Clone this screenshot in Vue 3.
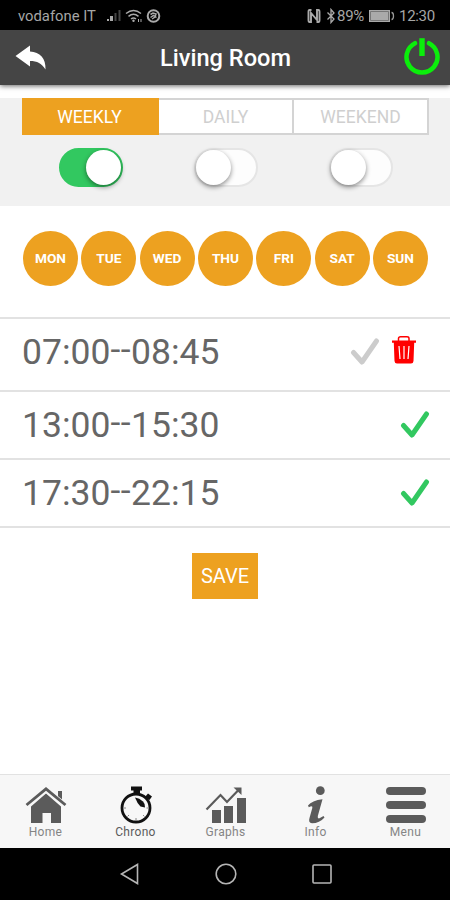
<!-- Weekly chrono programming screen -->
<template>
  <div class="screen">
    <div class="status-bar">
      <span class="carrier">vodafone IT</span>
      <svg class="status-left" viewBox="0 0 56 16">
        <path d="M1 13h2v-2H1zM4 13h3V8H4z" fill="#aaa" />
        <path d="M8.500 13h2V5h-2zM12.500 13h2V2h-2z" fill="#444" />
        <g fill="none" stroke="#aaa" stroke-width="1.500">
          <path d="M20 5.500q7.500-6 15 0M22.500 8.300q5-4 10 0M25 11q2.500-2 5 0" />
          <circle cx="47.500" cy="8" r="5.800" stroke-width="2" />
          <path d="M44.500 6.500l2.500-1.500 3 1-1 3-3 2M44.500 9.500l3-2 3 2" />
        </g>
        <circle cx="27.500" cy="12.800" r="1.200" fill="#aaa" />
        <path d="M32.500 11v3M35 11v3" stroke="#aaa" />
      </svg>
      <svg class="status-right" viewBox="0 0 30 16">
        <g fill="none" stroke="#aaa">
          <path d="M4.500 2H2.500Q1.500 2 1.500 4v8q0 2 1 2h1.500V5l6 7V2h1.500q1 0 1 2v8q0 2-1 2H9.500" stroke-width="1.900" />
          <path d="M20.500 4.500l6.500 6.500-3 3.500v-13l3 3.500-6.500 6.500" stroke-width="1.300" />
        </g>
      </svg>
      <span class="percent">89%</span>
      <svg class="battery" viewBox="0 0 27 14">
        <rect x="1" y="1" width="21" height="12" fill="#aaa" />
        <path d="M2.500 2.500h18v9h-18z" fill="none" stroke="#777" />
        <path d="M23.500 3.500q2 0 2 3.500t-2 3.500" fill="none" stroke="#999" stroke-width="1.300" />
      </svg>
      <span class="clock">12:30</span>
    </div>

    <header class="header">
      <button class="icon-btn">
        <svg class="back" viewBox="0 0 32 26">
          <path d="M0.500 11L15 0.500V6.500C25 7 31 13 30.500 24.500C27 18.500 22 16 15 16V21.500Z" fill="#fff" />
        </svg>
      </button>
      <h1>Living Room</h1>
      <button class="icon-btn" @click="powered = !powered">
        <svg class="power" :class="{ off: !powered }" viewBox="0 0 38 38">
          <g fill="none" stroke="currentColor">
            <path d="M12 6.200A15.500 15.500 0 1 0 26 6.200" stroke-width="4.500" stroke-linecap="round" />
            <path d="M19 1.200V19" stroke-width="5.400" />
          </g>
        </svg>
      </button>
    </header>

    <section class="modes">
      <div class="segments">
        <button
          v-for="mode in modes"
          :key="mode"
          :class="['segment', { active: mode === selectedMode }]"
          @click="selectedMode = mode"
        >{{ mode }}</button>
      </div>
      <div class="switches">
        <div v-for="mode in modes" :key="mode" class="switch-cell">
          <button :class="['switch', { on: mode === selectedMode }]" @click="selectedMode = mode">
            <span class="knob"></span>
          </button>
        </div>
      </div>
    </section>

    <section class="days">
      <button
        v-for="day in days"
        :key="day.name"
        :class="['day', { inactive: !day.active }]"
        @click="day.active = !day.active"
      >{{ day.name }}</button>
    </section>

    <section class="slots">
      <div v-for="slot in slots" :key="slot.start" :class="['slot', { editing: !slot.enabled }]">
        <span class="time">{{ slot.start }}<span class="dash">--</span>{{ slot.end }}</span>
        <svg :class="['check', { enabled: slot.enabled }]" viewBox="0 0 30 30" @click="slot.enabled = !slot.enabled">
          <path d="M3.500 15.500L12 25L26.500 4" />
        </svg>
        <svg v-if="!slot.enabled" class="trash" viewBox="0 0 26 30" @click="removeSlot(slot)">
          <path d="M7.500 6V3.500Q7.500 1.800 9.500 1.800H16Q18 1.800 18 3.500V6" fill="none" stroke="#f00" stroke-width="1.500" />
          <path d="M1 5.500H25V7.800H23.200L22.500 26Q22.300 28.500 20 28.500H6Q3.700 28.500 3.500 26L2.800 7.800H1Z" fill="#f00" />
          <path d="M8 11L9 24M13 11V24M18 11L17 24" stroke="#fff" stroke-width="1.200" />
        </svg>
      </div>
    </section>

    <div class="save-area">
      <button class="save">SAVE</button>
    </div>

    <nav class="tab-bar">
      <button class="tab">
        <svg viewBox="0 0 42 38" fill="#5b5b5b">
          <path d="M33 5h4v12L33 13z" />
          <path d="M21 7.500L36 20.500V37H26V27H17.500V37H6V20.500Z" />
          <path d="M1.500 19.500L21 3.500L40.500 19.500" fill="none" stroke="#f7f7f7" stroke-width="5" />
          <path d="M1.500 19L21 2.800L40.500 19" fill="none" stroke="#5b5b5b" stroke-width="2.800" />
        </svg>
        <span>Home</span>
      </button>
      <button class="tab active">
        <svg viewBox="0 0 42 38" fill="#111">
          <circle cx="21" cy="22" r="14" fill="none" stroke="#111" stroke-width="2.800" />
          <path d="M16 0.500H27V4.500H25V8H18.500V4.500H16Z" />
          <path d="M30 11L33 7.500L37 10.500L34.500 14Z" />
          <path d="M20 11.500Q24.500 12 28 15.500Q30.500 18 30 21.500L25.500 20.500Q22 17 20 11.500Z" />
          <path d="M21 32v3M9 22h2M31.500 22h2M12.500 30.500l1.500-1.500M29.500 30.500L28 29" stroke="#888" />
        </svg>
        <span>Chrono</span>
      </button>
      <button class="tab">
        <svg viewBox="0 0 42 38" fill="#5b5b5b">
          <path d="M7 24h9v13H7zM19 20h9v17h-9zM32 12h9v25h-9z" />
          <path d="M1.500 23.500L15.500 9L22 16L33 4.500" fill="none" stroke="#5b5b5b" stroke-width="2.200" />
          <path d="M28.500 1.500H36.500V9Z" />
        </svg>
        <span>Graphs</span>
      </button>
      <button class="tab">
        <svg viewBox="0 0 42 38" fill="#5b5b5b">
          <circle cx="25.300" cy="4.700" r="4.400" />
          <path d="M13 19.500Q17 14.500 27.500 13.300L22.800 30Q22.300 33 24.500 32.300L28.500 30L29.500 31.500Q24.500 37.300 17 37.300Q13 37 14.500 32L17.300 22Q18 18.800 13.800 21.200Z" />
        </svg>
        <span>Info</span>
      </button>
      <button class="tab">
        <svg viewBox="0 0 42 38" fill="#5b5b5b">
          <rect x="1" y="1" width="40" height="8" rx="4" />
          <rect x="1" y="15" width="40" height="8" rx="4" />
          <rect x="1" y="29" width="40" height="8" rx="4" />
        </svg>
        <span>Menu</span>
      </button>
    </nav>

    <div class="android-nav">
      <svg viewBox="0 0 24 24"><path d="M19.500 2.500V21.500L3.500 12Z" /></svg>
      <svg viewBox="0 0 24 24"><circle cx="12" cy="12" r="9.800" /></svg>
      <svg viewBox="0 0 24 24"><rect x="3" y="3" width="18" height="18" rx="1" /></svg>
    </div>
  </div>
</template>

<script setup>
import { ref } from 'vue'

const powered = ref(true)
const modes = ['WEEKLY', 'DAILY', 'WEEKEND']
const selectedMode = ref('WEEKLY')

const days = ref(
  ['MON', 'TUE', 'WED', 'THU', 'FRI', 'SAT', 'SUN'].map((name) => ({ name, active: true }))
)

const slots = ref([
  { start: '07:00', end: '08:45', enabled: false },
  { start: '13:00', end: '15:30', enabled: true },
  { start: '17:30', end: '22:15', enabled: true }
])

const removeSlot = (slot) => {
  slots.value = slots.value.filter((item) => item !== slot)
}
</script>

<style>
body {
  margin: 0;
}
</style>

<style scoped>
.screen {
  display: flex;
  flex-direction: column;
  width: 450px;
  height: 900px;
  overflow: hidden;
  background: #fff;
  font-family: Roboto, 'Liberation Sans', sans-serif;
}

button {
  font-family: inherit;
  border: none;
  padding: 0;
  background: none;
  cursor: pointer;
}

svg {
  display: block;
  flex: none;
}

.status-bar {
  display: flex;
  align-items: center;
  flex: none;
  height: 30px;
  box-sizing: border-box;
  padding: 2px 14px 0 18px;
  background: #000;
  color: #a6a6a6;
  font-size: 15px;
}

.carrier {
  width: 88px;
  font-size: 14.8px;
  white-space: nowrap;
}

.status-left {
  width: 56px;
  height: 16px;
}

.status-right {
  width: 30px;
  height: 16px;
  margin-left: auto;
}

.percent {
  width: 31px;
  white-space: nowrap;
  letter-spacing: -0.3px;
}

.battery {
  width: 27px;
  height: 14px;
}

.clock {
  width: 37px;
  margin-left: 4px;
  white-space: nowrap;
  letter-spacing: -0.3px;
}

.header {
  display: flex;
  align-items: center;
  justify-content: space-between;
  flex: none;
  height: 55px;
  box-sizing: border-box;
  padding: 0 9px 0 15px;
  background: #454545;
  box-shadow: 0 1px 5px rgba(0, 0, 0, 0.6);
  z-index: 1;
}

.icon-btn {
  width: 38px;
}

.back {
  width: 32px;
  height: 26px;
}

.header h1 {
  margin: 0 0 0 -5px;
  color: #fff;
  font-size: 23.6px;
  font-weight: 500;
}

.power {
  width: 38px;
  height: 38px;
  margin-top: -4px;
  color: #0bee0b;
}

.power.off {
  color: #999;
}

.modes {
  flex: none;
  height: 108px;
  margin-top: 13px;
  background: #f1f1f1;
}

.segments {
  display: grid;
  grid-template-columns: 137px 135px 135px;
  height: 37px;
  margin-left: 22px;
}

.segment {
  box-sizing: border-box;
  border: 2px solid #d4d4d4;
  border-left-width: 0;
  background: #fff;
  color: #cfcfcf;
  font-size: 17.5px;
}

.segment.active {
  border-color: #eda120;
  background: #eda120;
  color: #fff;
}

.switches {
  display: grid;
  grid-template-columns: repeat(3, 135px);
  margin: 13px 0 0 23px;
}

.switch-cell {
  display: flex;
  justify-content: center;
}

.switch {
  display: flex;
  align-items: center;
  width: 64px;
  height: 39px;
  box-sizing: border-box;
  padding: 0;
  border: 2px solid #e5e5e5;
  border-radius: 20px;
  background: #fdfdfd;
}

.switch.on {
  justify-content: flex-end;
  border-color: #32c860;
  background: #32c860;
}

.knob {
  width: 35px;
  height: 35px;
  border-radius: 50%;
  background: #fff;
  box-shadow: 0 2px 5px rgba(0, 0, 0, 0.45);
}

.days {
  display: flex;
  justify-content: space-between;
  flex: none;
  height: 111px;
  box-sizing: border-box;
  padding: 25px 22px 0 23px;
}

.day {
  width: 55px;
  height: 55px;
  padding-bottom: 2px;
  border-radius: 50%;
  background: #eda120;
  color: #fff;
  font-size: 13.7px;
  font-weight: 700;
}

.day.inactive {
  background: #cfcfcf;
}

.slots {
  flex: none;
  border-top: 2px solid #e2e2e2;
}

.slot {
  display: flex;
  align-items: center;
  justify-content: space-between;
  height: 68px;
  box-sizing: border-box;
  padding: 0 20px 0 22px;
  border-bottom: 2px solid #e2e2e2;
}

.slot.editing {
  height: 73px;
  padding: 0 33px 5px 22px;
}

.time {
  flex: 1;
  color: #666;
  font-size: 35.5px;
}

.dash {
  position: relative;
  top: -3px;
  letter-spacing: 0.5px;
}

.check {
  width: 30px;
  height: 30px;
  fill: none;
  stroke: #ccc;
  stroke-width: 5;
  stroke-linecap: round;
  stroke-linejoin: round;
}

.check.enabled {
  stroke: #32c860;
}

.trash {
  width: 26px;
  height: 30px;
  margin: -4px 0 0 11px;
}

.save-area {
  display: flex;
  justify-content: center;
  align-items: flex-start;
  flex: 1;
  padding-top: 25px;
}

.save {
  width: 66px;
  height: 46px;
  background: #eda120;
  color: #fff;
  font-size: 20px;
}

.tab-bar {
  display: grid;
  grid-template-columns: repeat(5, 1fr);
  flex: none;
  height: 74px;
  box-sizing: border-box;
  border-top: 1px solid #e2e2e2;
  background: #f7f7f7;
}

.tab {
  display: flex;
  flex-direction: column;
  align-items: center;
  padding: 11px 0 0 1px;
  color: #858585;
  font-size: 12px;
  letter-spacing: 0.3px;
}

.tab.active {
  color: #5b5b5b;
}

.tab svg {
  width: 42px;
  height: 38px;
}

.tab span {
  margin-top: 1px;
  line-height: 14px;
}

.android-nav {
  display: flex;
  justify-content: center;
  align-items: center;
  gap: 72px;
  flex: none;
  height: 52px;
  box-sizing: border-box;
  padding-left: 1px;
  background: #000;
}

.android-nav svg {
  width: 24px;
  height: 24px;
  fill: none;
  stroke: #b5b5b5;
  stroke-width: 1.6;
}
</style>
